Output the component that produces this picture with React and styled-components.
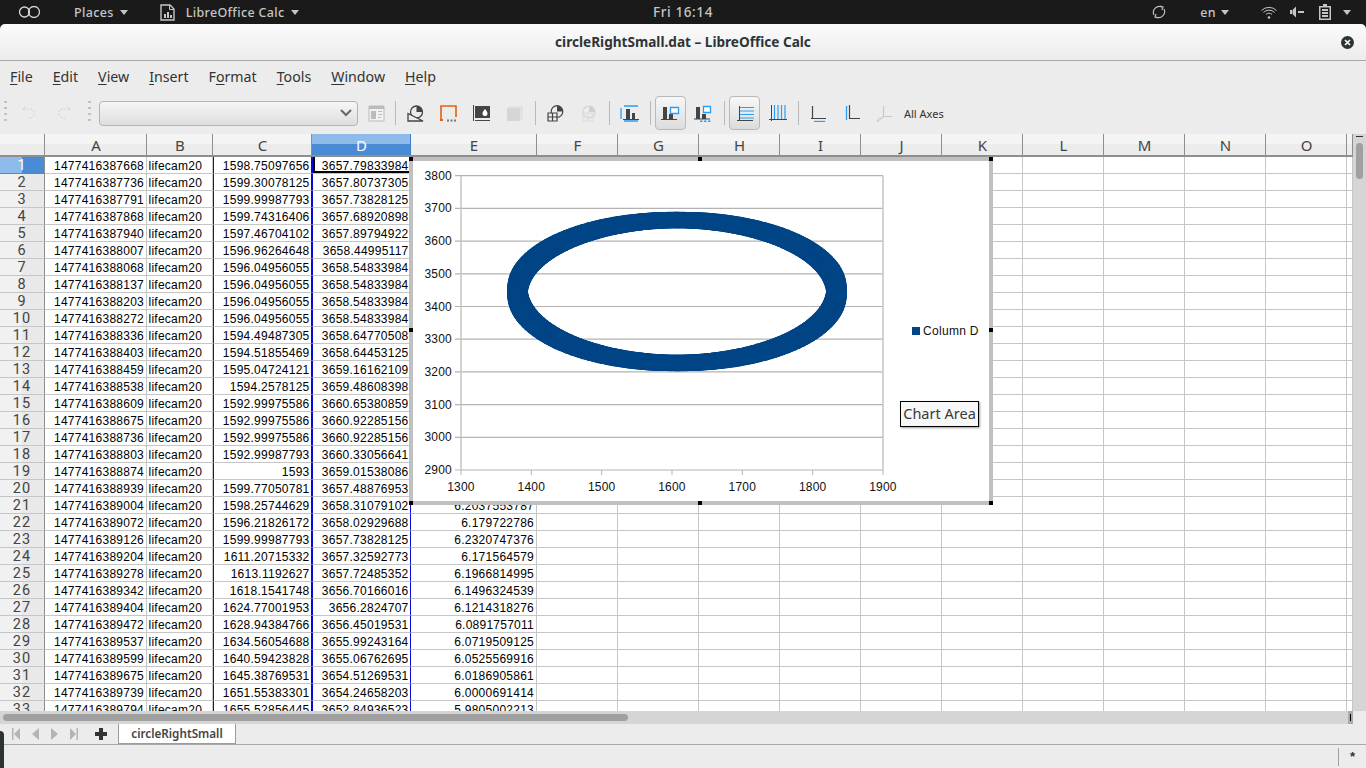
import React from "react";
import styled, { createGlobalStyle } from "styled-components";

const COLS = "45px 102px 66px 99px 99px 126px repeat(10, 81px) 6px";
const LETTERS = ["A", "B", "C", "D", "E", "F", "G", "H", "I", "J", "K", "L", "M", "N", "O"];

const DATA = [
  ["1477416387668", "1598.75097656", "3657.79833984", ""],
  ["1477416387736", "1599.30078125", "3657.80737305", ""],
  ["1477416387791", "1599.99987793", "3657.73828125", ""],
  ["1477416387868", "1599.74316406", "3657.68920898", ""],
  ["1477416387940", "1597.46704102", "3657.89794922", ""],
  ["1477416388007", "1596.96264648", "3658.44995117", ""],
  ["1477416388068", "1596.04956055", "3658.54833984", ""],
  ["1477416388137", "1596.04956055", "3658.54833984", ""],
  ["1477416388203", "1596.04956055", "3658.54833984", ""],
  ["1477416388272", "1596.04956055", "3658.54833984", ""],
  ["1477416388336", "1594.49487305", "3658.64770508", ""],
  ["1477416388403", "1594.51855469", "3658.64453125", ""],
  ["1477416388459", "1595.04724121", "3659.16162109", ""],
  ["1477416388538", "1594.2578125", "3659.48608398", ""],
  ["1477416388609", "1592.99975586", "3660.65380859", ""],
  ["1477416388675", "1592.99975586", "3660.92285156", ""],
  ["1477416388736", "1592.99975586", "3660.92285156", ""],
  ["1477416388803", "1592.99987793", "3660.33056641", ""],
  ["1477416388874", "1593", "3659.01538086", ""],
  ["1477416388939", "1599.77050781", "3657.48876953", ""],
  ["1477416389004", "1598.25744629", "3658.31079102", "6.2037553787"],
  ["1477416389072", "1596.21826172", "3658.02929688", "6.179722786"],
  ["1477416389126", "1599.99987793", "3657.73828125", "6.2320747376"],
  ["1477416389204", "1611.20715332", "3657.32592773", "6.171564579"],
  ["1477416389278", "1613.1192627", "3657.72485352", "6.1966814995"],
  ["1477416389342", "1618.1541748", "3656.70166016", "6.1496324539"],
  ["1477416389404", "1624.77001953", "3656.2824707", "6.1214318276"],
  ["1477416389472", "1628.94384766", "3656.45019531", "6.0891757011"],
  ["1477416389537", "1634.56054688", "3655.99243164", "6.0719509125"],
  ["1477416389599", "1640.59423828", "3655.06762695", "6.0525569916"],
  ["1477416389675", "1645.38769531", "3654.51269531", "6.0186905861"],
  ["1477416389739", "1651.55383301", "3654.24658203", "6.0000691414"],
  ["1477416389794", "1655.52856445", "3652.84936523", "5.9805002213"],
];

const Global = createGlobalStyle`
  html, body { margin: 0; padding: 0; background: #1a1a1a; overflow: hidden; }
  * { box-sizing: border-box; }
`;

const Screen = styled.div`
  position: relative;
  width: 1366px;
  height: 768px;
  display: flex;
  flex-flow: column;
  overflow: hidden;
  font-family: "Noto Sans", sans-serif;
`;

const TopBar = styled.div`
  height: 24px;
  flex: none;
  background: #1a1a1a;
  color: #c6c6c6;
  display: grid;
  grid-template-columns: 1fr auto 1fr;
  align-items: center;
  font-size: 12.5px;
  font-weight: 500;
  letter-spacing: 0.35px;
`;
const TopLeft = styled.div`
  display: flex;
  align-items: center;
  padding-left: 18px;
`;
const TopRight = styled.div`
  display: flex;
  align-items: center;
  justify-content: flex-end;
  padding-right: 15px;
`;
const Clock = styled.div`
  font-size: 13.5px;
  letter-spacing: 0.6px;
`;
const TopItem = styled.div`
  display: flex;
  align-items: center;
  margin-left: ${(p) => p.$left || 0}px;
`;
const Caret = styled.span`
  width: 0;
  height: 0;
  margin-left: ${(p) => p.$left ?? 6}px;
  border-left: 4.5px solid transparent;
  border-right: 4.5px solid transparent;
  border-top: 5px solid #c6c6c6;
`;

const TitleBar = styled.div`
  height: 37px;
  flex: none;
  position: relative;
  display: flex;
  align-items: center;
  justify-content: center;
  padding-bottom: 2px;
  border-radius: 5px 5px 0 0;
  border-bottom: 1px solid #a9a9a9;
  background: linear-gradient(#fbfbfb, #ececec);
  color: #2e3436;
  font-size: 13.6px;
  font-weight: 700;
`;
const CloseButton = styled.span`
  position: absolute;
  right: 12px;
  top: 12px;
  width: 13px;
  height: 13px;
  border-radius: 50%;
  background: #2e3436;
  display: flex;
`;

const MenuBar = styled.div`
  height: 33px;
  flex: none;
  display: flex;
  align-items: center;
  gap: 20px;
  padding: 0 0 3px 10px;
  background: #ececec;
  color: #333;
  font-size: 14.2px;
`;
const MenuItem = styled.span`
  u { text-underline-offset: 2px; text-decoration-thickness: 1px; }
`;

const ToolBar = styled.div`
  height: 40px;
  flex: none;
  display: flex;
  align-items: center;
  padding: 0 0 2px 3px;
  background: #ececec;
`;
const Grip = styled.span`
  width: 3px;
  height: 24px;
  flex: none;
  margin: ${(p) => p.$margin};
  background: repeating-linear-gradient(#c2c2c2 0 2px, transparent 2px 6px);
`;
const Slot = styled.span`
  width: ${(p) => p.$width || 33}px;
  height: 34px;
  flex: none;
  display: flex;
  align-items: center;
  justify-content: center;
  border-radius: 4px;
  ${(p) =>
    p.$active &&
    `
    margin: 0 1px;
    width: 31px;
    border: 1px solid #b9b9b9;
    background: linear-gradient(#f7f7f7, #dcdcdc);
  `}
`;
const Sep = styled.span`
  width: 1px;
  height: 24px;
  flex: none;
  margin: ${(p) => (p.$first ? "0 3.5px 0 0.5px" : "0 3.5px")};
  background: #b8b8b8;
`;
const Combo = styled.div`
  width: 259px;
  height: 25px;
  flex: none;
  display: flex;
  align-items: center;
  justify-content: flex-end;
  padding-right: 5px;
  border: 1px solid #b4b4b4;
  border-radius: 4px;
  background: linear-gradient(#f6f6f6, #dedede);
`;
const ToolText = styled.span`
  margin-left: 3px;
  color: #333;
  font-size: 11px;
`;

const Sheet = styled.div`
  position: relative;
  height: 577px;
  flex: none;
  display: flex;
  background: #fff;
`;
const SheetMain = styled.div`
  width: 1353px;
  height: 577px;
  overflow: hidden;
`;
const HeadRow = styled.div`
  display: grid;
  grid-template-columns: ${COLS};
  height: 23px;
  border-bottom: 2px solid #8e8e8e;
`;
const ColHead = styled.div`
  display: flex;
  align-items: center;
  justify-content: center;
  padding-left: 1px;
  border-right: 1px solid ${(p) => (p.$selected ? "#3f7fc9" : "#8e8e8e")};
  background: ${(p) =>
    p.$selected
      ? "linear-gradient(#8fbbea 0 50%, #4a8bd6 50% 100%)"
      : "linear-gradient(#f4f4f4 0 50%, #ececec 50% 100%)"};
  color: ${(p) => (p.$selected ? "#fff" : "#444")};
  font-size: 15px;
`;
const Body = styled.div`
  height: 554px;
  overflow: hidden;
  position: relative;
`;
const Row = styled.div`
  display: grid;
  grid-template-columns: ${COLS};
  grid-template-rows: 17px;
  height: 17px;
`;
const RowHead = styled.div`
  display: flex;
  align-items: center;
  justify-content: center;
  border-right: 1px solid #8e8e8e;
  border-bottom: 1px solid ${(p) => (p.$selected ? "#4a8bd6" : "#c6c6c6")};
  background: ${(p) =>
    p.$selected
      ? "linear-gradient(90deg, #8fbbea 0 22px, #4a8bd6 22px 100%)"
      : "linear-gradient(90deg, #f1f1f1 0 22px, #e9e9e9 22px 100%)"};
  color: ${(p) => (p.$selected ? "#fff" : "#444")};
  font-family: Roboto, sans-serif;
  font-size: 14.5px;
  line-height: 17px;
  letter-spacing: 1px;
`;
const Cell = styled.div`
  overflow: hidden;
  white-space: nowrap;
  display: flex;
  align-items: flex-start;
  justify-content: ${(p) => (p.$left ? "flex-start" : "flex-end")};
  padding: ${(p) => (p.$left ? "2px 0 0 1.5px" : p.$sel ? "2px 1.5px 0 0" : "2px 2px 0 0")};
  border-right: 1px solid ${(p) => (p.$sel ? "#0a0ad8" : "#c6c6c6")};
  border-left: ${(p) => (p.$sel ? "1px solid #0a0ad8" : "0")};
  border-bottom: 1px solid #c6c6c6;
  color: #000;
  font-family: "Liberation Sans", Arial, sans-serif;
  font-size: 12px;
  line-height: 14px;
  letter-spacing: 0.25px;
  ${(p) => p.$active && "box-shadow: inset 2px 0 #000, inset 0 -2px #000;"}
`;

const Chart = styled.div`
  position: absolute;
  left: 409px;
  top: 23px;
  width: 584px;
  height: 348px;
  border: 4px solid #c0c0c0;
  background: #fff;
`;
const Handle = styled.span`
  position: absolute;
  width: 4px;
  height: 4px;
  background: #000;
  left: ${(p) => p.$x}px;
  top: ${(p) => p.$y}px;
`;
const Legend = styled.div`
  position: absolute;
  left: 499px;
  top: 163px;
  display: flex;
  align-items: center;
  gap: 3px;
  color: #111;
  font-family: "Liberation Sans", Arial, sans-serif;
  font-size: 12px;
  letter-spacing: 0.3px;
`;
const LegendMark = styled.span`
  width: 8px;
  height: 8px;
  background: #004586;
`;
const ChartTip = styled.div`
  position: absolute;
  left: 487px;
  top: 240px;
  width: 79px;
  height: 26px;
  display: flex;
  align-items: center;
  justify-content: center;
  padding-bottom: 2px;
  border: 1px solid #000;
  background: #f7f7f7;
  box-shadow: 1px 1px 2px rgba(0, 0, 0, 0.4);
  color: #3a3a3a;
  font-size: 14.5px;
  white-space: nowrap;
`;

const VScroll = styled.div`
  width: 13px;
  height: 577px;
  position: relative;
  background: #d5d5d5;
`;
const VThumb = styled.div`
  position: absolute;
  left: 3px;
  top: 9px;
  width: 7px;
  height: 36px;
  border-radius: 4px;
  background: #a0a0a0;
`;
const VDash = styled.div`
  position: absolute;
  left: 3px;
  top: 2px;
  width: 7px;
  height: 1px;
  background: #333;
`;

const ScrollRow = styled.div`
  height: 13px;
  flex: none;
  display: flex;
  background: #ececec;
`;
const HTrack = styled.div`
  width: 1348px;
  background: #d5d5d5;
  padding: 3px 0 0 3px;
`;
const HThumb = styled.div`
  width: 625px;
  height: 7px;
  border-radius: 4px;
  background: #a0a0a0;
`;
const SplitBox = styled.div`
  width: 5px;
  background: #aaa;
  display: flex;
  justify-content: center;
  padding: 3px 0;
  &::after { content: ""; width: 1px; background: #000; }
`;

const TabRow = styled.div`
  height: 20px;
  flex: none;
  display: flex;
  align-items: flex-start;
  background: #ececec;
`;
const TabNav = styled.div`
  width: 118px;
  height: 20px;
  flex: none;
  display: flex;
  align-items: center;
  padding-left: 7px;
`;
const NavSlot = styled.span`
  width: 19px;
  display: flex;
  justify-content: center;
`;
const AddSheet = styled.svg`
  margin-left: 12px;
  flex: none;
`;
const Tab = styled.div`
  width: 118px;
  height: 20px;
  display: flex;
  align-items: center;
  justify-content: center;
  padding-bottom: 1px;
  border: 1px solid #9c9c9c;
  border-top: 0;
  background: #fff;
  color: #444;
  font-size: 11.7px;
  font-weight: 600;
`;
const StatusBar = styled.div`
  height: 24px;
  flex: none;
  display: flex;
  justify-content: flex-end;
  align-items: center;
  border-top: 1px solid #a9a9a9;
  background: #ececec;
`;
const StatusCell = styled.div`
  width: 28px;
  height: 18px;
  display: flex;
  align-items: center;
  justify-content: center;
  border-left: 1px solid #a0a0a0;
  color: #333;
  font-family: "Liberation Sans", Arial, sans-serif;
  font-size: 13px;
  font-weight: 700;
`;
const WindowEdge = styled.div`
  position: absolute;
  left: 0;
  top: 731px;
  width: 4px;
  height: 37px;
  border-radius: 0 4px 0 0;
  background: #2c3332;
`;

const D = "#444";
const B = "#2a9df4";
const L = "#c9c9c9";

const Icon = ({ children, w = 17, h = 17 }) => (
  <svg width={w} height={h} viewBox={`0 0 ${w} ${h}`} fill="none">
    {children}
  </svg>
);

const Bars = ({ x = 2, c = D }) => (
  <>
    <path d={`M${x} 2h4v12h-4z`} fill={c} />
    <path d={`M${x + 6} 9h4v5h-4z`} fill={c} />
  </>
);

const TOOL_ICONS = {
  undo: (
    <Icon>
      <path d="M2 4h7a4 4 0 0 1 3 7c-1 2-3 2-5 2M4.500 1.500 2 4l2.500 2.500" stroke="#cfcfcf" strokeDasharray="2 1.500" />
    </Icon>
  ),
  redo: (
    <Icon>
      <path d="M15 4H8a4 4 0 0 0-3 7c1 2 3 2 5 2M12.500 1.500 15 4l-2.500 2.500" stroke="#cfcfcf" strokeDasharray="2 1.500" />
    </Icon>
  ),
  panel: (
    <Icon>
      <path d="M1 1h15v15H1z" fill="#f2f2f2" stroke="#bbb" />
      <path d="M1 1h15v3H1z" fill="#bbb" />
      <path d="M3 6h5v8H3zM10 6h4v1h-4zM10 9h4v1h-4zM10 12h3v1h-3z" fill="#bbb" />
    </Icon>
  ),
  pie: (
    <Icon>
      <circle cx="9.500" cy="7" r="6" stroke={D} strokeWidth="1.300" />
      <path d="M9.500 1a6 6 0 0 1 6 6h-6z" fill={D} />
      <path d="M1 8.500 16 16H1z" fill="#ececec" stroke={D} strokeWidth="1.300" />
    </Icon>
  ),
  border: (
    <Icon>
      <path d="M1 15V1h15v11" stroke="#e4600e" strokeWidth="1.600" />
      <path d="M0 14h3v2H0z" fill="#e4600e" />
      <path d="M7 14.500h2v2H7zM10.500 14.500h2v2h-2zM14 14.500h2v2h-2z" fill="#777" />
    </Icon>
  ),
  fill: (
    <Icon>
      <path d="M.5 0v16M2 15.500h15" stroke={D} />
      <path d="M2 1h15v12H2z" fill={D} />
      <path d="M12 4c1.500 2 2.500 3 2.500 4.500a2.500 2.500 0 0 1-5 0C9.500 7 10.500 6 12 4z" fill="#fff" />
    </Icon>
  ),
  cube: (
    <Icon>
      <path d="M1 3l3-2h13v12l-3 3H1z" fill="#e2e2e2" />
      <path d="M1 3h13v13H1z" fill="#d6d6d6" />
    </Icon>
  ),
  wall: (
    <Icon>
      <circle cx="10" cy="6.500" r="5.800" stroke={D} strokeWidth="1.200" />
      <path d="M10 .7a5.800 5.800 0 0 1 5.800 5.800H10z" fill={D} />
      <path d="M1 8h9v8H1zM5.500 8v8M1 12h9" fill="#ececec" stroke={D} strokeWidth="1.200" />
    </Icon>
  ),
  wallOff: (
    <Icon>
      <circle cx="9" cy="7" r="6" stroke="#d4d4d4" strokeWidth="1.200" />
      <path d="M9 1a6 6 0 0 1 6 6H9z" fill="#cfcfcf" />
      <path d="M3 8h10v8H3zM8 8v8M3 12h10" stroke="#dcdcdc" />
    </Icon>
  ),
  barsBlue: (
    <Icon w={20}>
      <path d="M1 3v11M4 1h14M4 16h14" stroke={B} strokeWidth="1.300" />
      <path d="M6 4h4v10H6zM12 8h3v6h-3z" fill={D} />
      <path d="M3 14.500h16" stroke={D} />
    </Icon>
  ),
  barsLegend: (
    <Icon w={20}>
      <Bars />
      <path d="M0 14.500h16" stroke={D} />
      <path d="M9.500 2.500h8v6h-8z" stroke={B} strokeWidth="1.300" fill="#fff" />
    </Icon>
  ),
  barsLegendDots: (
    <Icon w={20}>
      <Bars />
      <path d="M0 14h16" stroke={D} />
      <path d="M9.500 1.500h7v6h-7z" stroke={B} strokeWidth="1.300" fill="#fff" />
      <path d="M6 15.500h2.500v2H6zM10 15.500h2.500v2H10zM14 15.500h2.500v2H14z" fill={B} />
    </Icon>
  ),
  gridH: (
    <Icon w={18}>
      <path d="M3 2.500h15M3 6h15M3 9.500h15M3 13h15" stroke={B} strokeWidth="1.200" />
      <path d="M3.500 1v15M1 15.500h16" stroke={D} />
    </Icon>
  ),
  gridV: (
    <Icon w={18}>
      <path d="M5.500 0v15M9 0v15M12.500 0v15M16 0v15" stroke={B} strokeWidth="1.200" />
      <path d="M2.500 0v16M0 14.500h18" stroke={D} />
    </Icon>
  ),
  axisX: (
    <Icon>
      <path d="M2.500 1v13M1 13.500h15" stroke={D} strokeWidth="1.200" />
      <path d="M4 16.500h11" stroke={B} strokeWidth="1.300" />
    </Icon>
  ),
  axisY: (
    <Icon>
      <path d="M3.500 1v14" stroke={B} strokeWidth="1.300" />
      <path d="M6.500 0v14M6 13.500h11" stroke={D} strokeWidth="1.200" />
    </Icon>
  ),
  axisZ: (
    <Icon>
      <path d="M7.500 1v10.500H16M7.500 11.500 1 16.500" stroke={L} strokeWidth="1.200" />
      <path d="M4 11.500l-3 3" stroke="#ddd" />
    </Icon>
  ),
};

const Tool = ({ name, active, width }) => (
  <Slot $active={active} $width={width}>
    {TOOL_ICONS[name]}
  </Slot>
);

// scatter points round the ring, each one a fat marker like the calc plot
const POINTS = Array.from({ length: 720 }, (_, i) => {
  const t = (i / 720) * Math.PI * 2;
  const wobble = (((i * 7) % 5) - 2) * 0.12;
  return {
    x: 264 + (159.5 + wobble) * Math.cos(t),
    y: 130.5 + (71.5 + wobble) * Math.sin(t),
  };
});

function PlotArea() {
  const plotLeft = 48;
  const plotRight = 470;
  const plotTop = 14.7;
  const plotBottom = 309;
  const yLabels = [3800, 3700, 3600, 3500, 3400, 3300, 3200, 3100, 3000, 2900];
  const xLabels = [1300, 1400, 1500, 1600, 1700, 1800, 1900];
  const yStep = (plotBottom - plotTop) / 9;
  const xStep = (plotRight - plotLeft) / 6;
  return (
    <svg width="576" height="340" viewBox="0 0 576 340" style={{ display: "block" }}>
      {yLabels.map((v, i) => {
        const y = plotTop + i * yStep;
        return (
          <g key={v}>
            <line x1={plotLeft - 6} x2={plotRight} y1={y} y2={y} stroke="#b3b3b3" strokeWidth="1.200" />
            <text x={plotLeft - 9} y={y + 4} textAnchor="end" fontFamily="Liberation Sans" fontSize="12" letterSpacing="0.2" fill="#111">
              {v}
            </text>
          </g>
        );
      })}
      {xLabels.map((v, i) => {
        const x = plotLeft + i * xStep;
        return (
          <g key={v}>
            <line x1={x} x2={x} y1={plotBottom} y2={plotBottom + 5} stroke="#b3b3b3" />
            <text x={x} y={plotBottom + 21} textAnchor="middle" fontFamily="Liberation Sans" fontSize="12" letterSpacing="0.2" fill="#111">
              {v}
            </text>
          </g>
        );
      })}
      <line x1={plotLeft} x2={plotLeft} y1={plotTop} y2={plotBottom} stroke="#c4c4c4" strokeWidth="1.500" />
      <line x1={plotRight} x2={plotRight} y1={plotTop} y2={plotBottom} stroke="#c4c4c4" strokeWidth="1.500" />
      {POINTS.map((pt, i) => (
        <rect key={i} x={pt.x - 10} y={pt.y - 8} width="20" height="16" rx="5" ry="4" fill="#004586" />
      ))}
    </svg>
  );
}

const HANDLES = [
  [-4, -4],
  [285, -4],
  [576, -4],
  [-4, 167],
  [576, 167],
  [-4, 340],
  [285, 340],
  [576, 340],
];

export default function App() {
  return (
    <Screen>
      <Global />
      <TopBar>
        <TopLeft>
          <svg width="23" height="12" viewBox="0 0 23 12" fill="none">
            <circle cx="6.500" cy="6" r="5" stroke="#d8d8d8" strokeWidth="1.300" />
            <circle cx="16" cy="6" r="5.500" stroke="#d8d8d8" strokeWidth="1.300" />
          </svg>
          <TopItem $left={33}>
            Places
            <Caret />
          </TopItem>
          <TopItem $left={32}>
            <svg width="15" height="17" viewBox="0 0 15 17" fill="none">
              <path d="M1 1h9l4 4v11H1z" stroke="#c6c6c6" strokeWidth="1.400" />
              <path d="M9.500 1v4.500H14" stroke="#c6c6c6" />
              <path d="M4 10h2v4H4zM7 8h2v6H7zM10 11h2v3h-2z" fill="#c6c6c6" />
            </svg>
          </TopItem>
          <TopItem $left={11}>
            LibreOffice Calc
            <Caret />
          </TopItem>
        </TopLeft>
        <Clock>Fri 16:14</Clock>
        <TopRight>
          <svg width="14" height="14" viewBox="0 0 14 14" fill="none" stroke="#bdbdbd" strokeWidth="1.200">
            <path d="M2 10A6 6 0 0 1 10 2M12 4a6 6 0 0 1-8 8" />
            <path d="M8 1l3 1-1 3M6 13l-3-1 1-3" />
          </svg>
          <TopItem $left={34}>
            en
            <Caret $left={5} />
          </TopItem>
          <TopItem $left={32}>
            <svg width="16" height="13" viewBox="0 0 16 13" fill="none" stroke="#c6c6c6">
              <path d="M.5 4.500a10.500 10.500 0 0 1 15 0M2.500 6.500a7.500 7.500 0 0 1 11 0M5 8.500a4 4 0 0 1 6 0" />
              <circle cx="8" cy="11.500" r="1.300" fill="#c6c6c6" stroke="none" />
            </svg>
          </TopItem>
          <TopItem $left={13}>
            <svg width="14" height="12" viewBox="0 0 14 12" fill="#c6c6c6">
              <path d="M0 4h2v4H0zM2.500 4 6 .5v11L2.500 8zM8 5h6v2H8z" />
            </svg>
          </TopItem>
          <TopItem $left={15}>
            <svg width="12" height="16" viewBox="0 0 12 16" fill="none">
              <path d="M4 0h4v2h4v14H0V2h4z" fill="#c6c6c6" />
              <path d="M1.500 3.500h9v11h-9z" fill="#1a1a1a" />
              <path d="M3 5h6v2H3zM3 8h6v2H3zM3 11h6v2H3z" fill="#c6c6c6" />
            </svg>
          </TopItem>
          <TopItem $left={12}>
            <Caret $left={0} />
          </TopItem>
        </TopRight>
      </TopBar>

      <TitleBar>
        circleRightSmall.dat – LibreOffice Calc
        <CloseButton>
          <svg width="13" height="13" viewBox="0 0 13 13" stroke="#fff" strokeWidth="1.600">
            <path d="M4 4l5 5M9 4l-5 5" />
          </svg>
        </CloseButton>
      </TitleBar>

      <MenuBar>
        <MenuItem><u>F</u>ile</MenuItem>
        <MenuItem><u>E</u>dit</MenuItem>
        <MenuItem><u>V</u>iew</MenuItem>
        <MenuItem><u>I</u>nsert</MenuItem>
        <MenuItem>F<u>o</u>rmat</MenuItem>
        <MenuItem><u>T</u>ools</MenuItem>
        <MenuItem><u>W</u>indow</MenuItem>
        <MenuItem><u>H</u>elp</MenuItem>
      </MenuBar>

      <ToolBar>
        <Grip $margin="0 5px 0 1px" />
        <Tool name="undo" width={34} />
        <Tool name="redo" width={34} />
        <Grip $margin="0 8px" />
        <Combo>
          <svg width="12" height="8" viewBox="0 0 12 8" fill="none" stroke="#666" strokeWidth="2">
            <path d="M1 1l5 5 5-5" />
          </svg>
        </Combo>
        <Tool name="panel" width={36} />
        <Sep $first />
        <Tool name="pie" />
        <Tool name="border" />
        <Tool name="fill" />
        <Tool name="cube" />
        <Sep />
        <Tool name="wall" />
        <Tool name="wallOff" />
        <Sep />
        <Tool name="barsBlue" />
        <Sep />
        <Tool name="barsLegend" active />
        <Tool name="barsLegendDots" />
        <Sep />
        <Tool name="gridH" active />
        <Tool name="gridV" />
        <Sep />
        <Tool name="axisX" />
        <Tool name="axisY" />
        <Tool name="axisZ" />
        <ToolText>All Axes</ToolText>
      </ToolBar>

      <Sheet>
        <SheetMain>
          <HeadRow>
            <ColHead />
            {LETTERS.map((l) => (
              <ColHead key={l} $selected={l === "D"}>{l}</ColHead>
            ))}
            <ColHead />
          </HeadRow>
          <Body>
            {DATA.map((row, i) => (
              <Row key={row[0]}>
                <RowHead $selected={i === 0}>{i + 1}</RowHead>
                <Cell>{row[0]}</Cell>
                <Cell $left>lifecam20</Cell>
                <Cell $sel>{row[1]}</Cell>
                <Cell $sel $active={i === 0}>{row[2]}</Cell>
                <Cell>{row[3]}</Cell>
                {LETTERS.slice(5).map((l) => (
                  <Cell key={l} />
                ))}
                <Cell />
              </Row>
            ))}
          </Body>
        </SheetMain>
        <VScroll>
          <VDash />
          <VThumb />
        </VScroll>
        <Chart>
          <PlotArea />
          <Legend>
            <LegendMark />
            Column D
          </Legend>
          <ChartTip>Chart Area</ChartTip>
          {HANDLES.map(([x, y]) => (
            <Handle key={`${x}-${y}`} $x={x} $y={y} />
          ))}
        </Chart>
      </Sheet>

      <ScrollRow>
        <HTrack>
          <HThumb />
        </HTrack>
        <SplitBox />
      </ScrollRow>

      <TabRow>
        <TabNav>
          <NavSlot>
            <svg width="9" height="12" viewBox="0 0 9 12" fill="#b4b4b4"><path d="M0 0h1.500v12H0zM8 0v12L2 6z" /></svg>
          </NavSlot>
          <NavSlot>
            <svg width="7" height="12" viewBox="0 0 7 12" fill="#b4b4b4"><path d="M7 0v12L0 6z" /></svg>
          </NavSlot>
          <NavSlot>
            <svg width="7" height="12" viewBox="0 0 7 12" fill="#b4b4b4"><path d="M0 0v12l7-6z" /></svg>
          </NavSlot>
          <NavSlot>
            <svg width="9" height="12" viewBox="0 0 9 12" fill="#b4b4b4"><path d="M7.500 0H9v12H7.500zM1 0v12l6-6z" /></svg>
          </NavSlot>
          <AddSheet width="12" height="12" viewBox="0 0 12 12" fill="#333">
            <path d="M4 0h4v4h4v4H8v4H4V8H0V4h4z" />
          </AddSheet>
        </TabNav>
        <Tab>circleRightSmall</Tab>
      </TabRow>

      <StatusBar>
        <StatusCell>*</StatusCell>
      </StatusBar>

      <WindowEdge />
    </Screen>
  );
}
